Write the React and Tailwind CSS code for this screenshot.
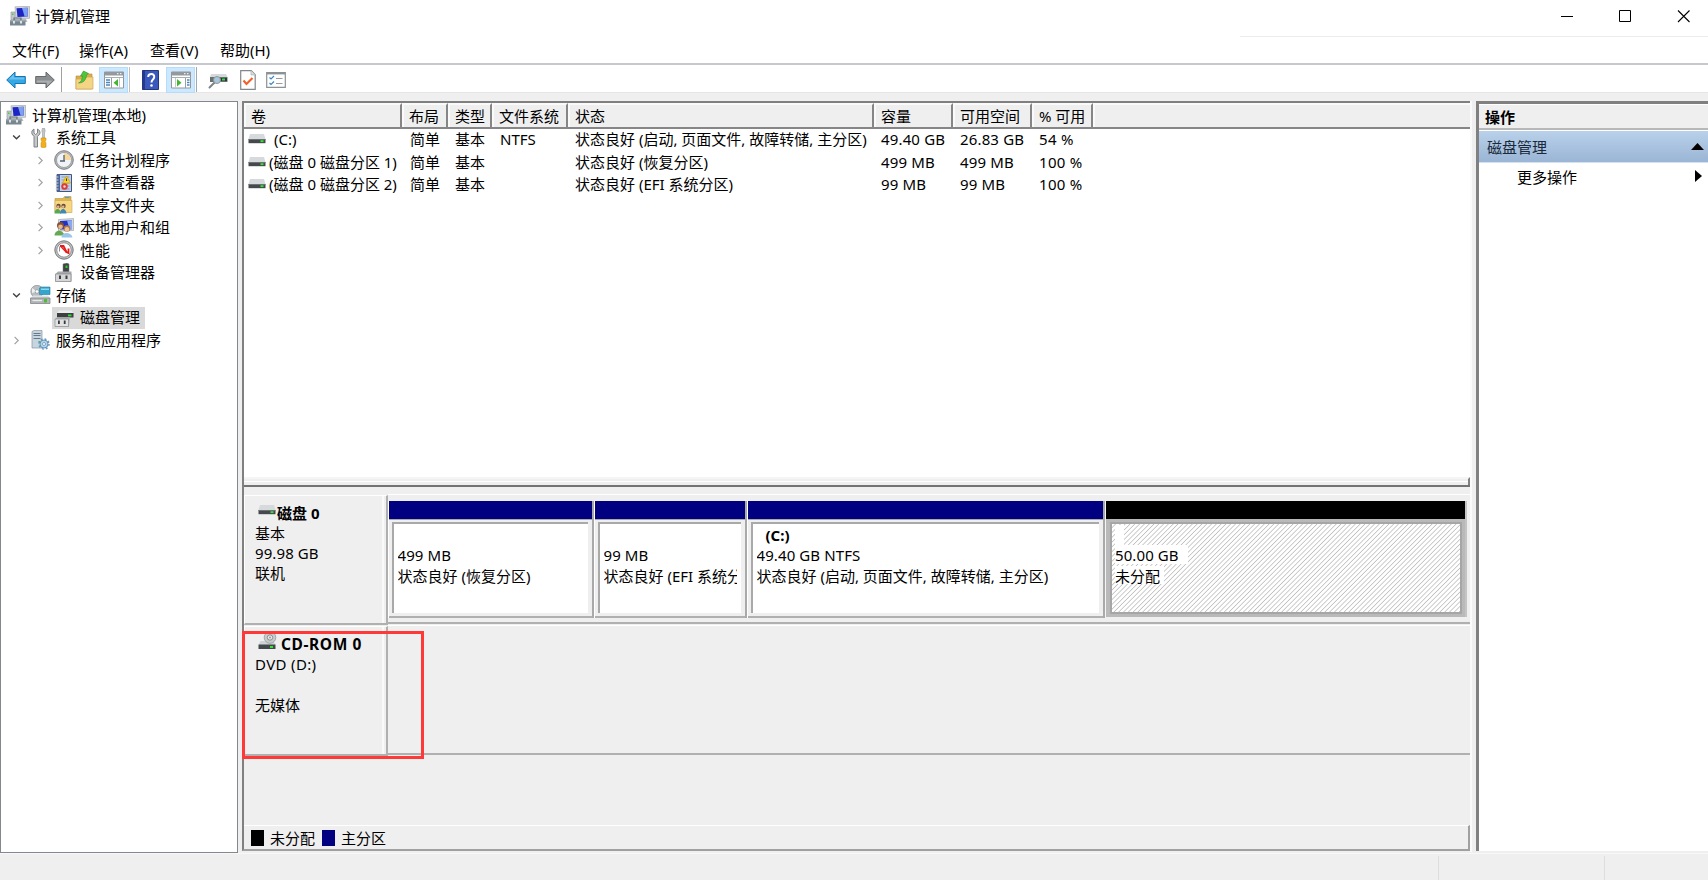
import React from "react";

const COLUMNS = ["卷", "布局", "类型", "文件系统", "状态", "容量", "可用空间", "% 可用", ""];

const VOLUMES = [
  {
    name: "(C:)",
    indent: true,
    fs: "NTFS",
    status: "状态良好 (启动, 页面文件, 故障转储, 主分区)",
    size: "49.40 GB",
    free: "26.83 GB",
    percent: "54 %",
  },
  {
    name: "(磁盘 0 磁盘分区 1)",
    fs: "",
    status: "状态良好 (恢复分区)",
    size: "499 MB",
    free: "499 MB",
    percent: "100 %",
  },
  {
    name: "(磁盘 0 磁盘分区 2)",
    fs: "",
    status: "状态良好 (EFI 系统分区)",
    size: "99 MB",
    free: "99 MB",
    percent: "100 %",
  },
];

const PARTITIONS = [
  { name: "", size: "499 MB", status: "状态良好 (恢复分区)", width: "w-[206px]" },
  { name: "", size: "99 MB", status: "状态良好 (EFI 系统分区)", width: "w-[153px]" },
  {
    name: "(C:)",
    size: "49.40 GB NTFS",
    status: "状态良好 (启动, 页面文件, 故障转储, 主分区)",
    width: "w-[358px]",
  },
];

/* ICONS */
function ComputerIcon() {
  return (
    <svg width="20" height="20" viewBox="0 0 20 20">
      <path d="M1 6h4v8H1z" fill="#c3c8cc" stroke="#8b9399" strokeWidth=".6" />
      <path d="M2 7.500h1.500v1.500H2z" fill="#46c93c" />
      <path d="M5 .8l14.500-.5v12L6 12.800z" fill="#d5d9dc" stroke="#9ba1a6" strokeWidth=".6" />
      <path d="M6.500 2.200l11.200-.4v8.800L7.500 11z" fill="#1c25c4" />
      <path d="M12 2l5.700-.2v8.800l-3 .2z" fill="#7ea0f0" />
      <path d="M10 13h6l1.500 3H10z" fill="#b6bcc0" />
      <path d="M4 12h7v2H4z" fill="none" stroke="#68747c" strokeWidth="1.200" />
      <path d="M0 14h15.500V19.500H0z" fill="#788690" />
      <path d="M0 14h15.500v1.500H0z" fill="#9aa8b0" />
      <path d="M3 15h2v2.500H3zM10 15h2v2.500h-2z" fill="#dde3e6" />
    </svg>
  );
}

function ToolsIcon() {
  return (
    <svg width="20" height="20" viewBox="0 0 20 20">
      <path d="M4 1v4l1.500 1.500L7.500 5V1c2 1 3 3 2.300 5L7.500 8.500V19H4V8.500L2 6C1.300 4 2 2 4 1z" fill="#c6c8ca" stroke="#75797c" strokeWidth=".9" />
      <path d="M12.500 0h2l.7 3-.7 2v5h-2V5l-.7-2z" fill="#c4c6c8" stroke="#8b8e90" strokeWidth=".5" />
      <path d="M11 10h5v2l-.8 1.500L16 15v4q-2.500 1.500-5 0v-4l.8-1.500L11 12z" fill="#f2b01e" stroke="#c98a0c" strokeWidth=".5" />
    </svg>
  );
}

function ClockIcon() {
  return (
    <svg width="20" height="20" viewBox="0 0 20 20">
      <circle cx="10" cy="10" r="9.300" fill="#b4b6b8" stroke="#7e8184" strokeWidth="1" />
      <circle cx="10" cy="10" r="7.500" fill="#f0f3f7" stroke="#94979a" strokeWidth=".8" />
      <path d="M10 10V3a7 7 0 0 1 7 7z" fill="#f7d7a0" />
      <path d="M10 5v6M6 11h5" fill="none" stroke="#56616b" strokeWidth="1.300" />
    </svg>
  );
}

function EventIcon() {
  return (
    <svg width="20" height="20" viewBox="0 0 20 20">
      <path d="M3 1.500h14.500v17H3z" fill="#c4d0e8" stroke="#3e5684" strokeWidth="1" />
      <path d="M3 1.500h3v17H3z" fill="#4d6699" />
      <path d="M1.500 4h3M1.500 7h3M1.500 10h3M1.500 13h3M1.500 16h3" stroke="#cdd1d6" strokeWidth="1.200" />
      <path d="M7.500 4h8M7.500 7h8M7.500 10h8M7.500 13h8M7.500 16h8" stroke="#7d90ba" strokeWidth=".8" />
      <path d="M12.500 3l4 7H8.500z" fill="#f8d321" stroke="#c99d0a" strokeWidth=".6" />
      <path d="M12.500 5.500v2.500" stroke="#3b3200" strokeWidth="1" />
      <circle cx="10.500" cy="13.500" r="3.200" fill="#dc3c36" />
      <circle cx="10.500" cy="13.500" r="1.200" fill="#f7dcda" />
    </svg>
  );
}

function SharedFolderIcon() {
  return (
    <svg width="20" height="20" viewBox="0 0 20 20">
      <path d="M1 3.500h8l1.500-2H17V17H1z" fill="#dfb64e" stroke="#bd9238" strokeWidth=".6" />
      <path d="M11 2.500h4.500" stroke="#4a9edb" strokeWidth="1.200" />
      <path d="M1 5.500h17V17.500H1z" fill="#f6d783" stroke="#cda651" strokeWidth=".6" />
      <circle cx="4.500" cy="11" r="2.200" fill="#6c4a35" />
      <circle cx="9.500" cy="11" r="2.200" fill="#684a37" />
      <circle cx="4.200" cy="11.800" r="1.300" fill="#e8b68e" />
      <circle cx="9.200" cy="11.800" r="1.300" fill="#e8b68e" />
      <path d="M.5 18.500c0-6 6-6 6.500 0z" fill="#57a853" />
      <path d="M6 18.500c0-6 6-6 6.500 0z" fill="#4286b8" />
    </svg>
  );
}

function UsersIcon() {
  return (
    <svg width="20" height="20" viewBox="0 0 20 20">
      <path d="M4.500 1.500l15-1v12L4.500 13z" fill="#d7dadd" stroke="#969ca2" strokeWidth=".6" />
      <path d="M6 3l12-.7v9L6 11.500z" fill="#1f32c5" />
      <path d="M13 2.500l5-.2v9h-2.500z" fill="#89a8f1" />
      <circle cx="6.500" cy="7.500" r="3.500" fill="#825237" />
      <circle cx="6.500" cy="8.800" r="2.300" fill="#ebb88c" />
      <path d="M.5 17.500c0-6.500 9-6.500 10 0z" fill="#66a952" />
      <circle cx="13" cy="10.500" r="3.300" fill="#a97750" />
      <circle cx="13" cy="11.300" r="2.200" fill="#f0c29a" />
      <path d="M7.500 19.500c0-6 10-6 11 0z" fill="#9ac7e9" />
    </svg>
  );
}

function PerformanceIcon() {
  return (
    <svg width="20" height="20" viewBox="0 0 20 20">
      <circle cx="10" cy="10" r="9.200" fill="#c0c2c4" stroke="#74787b" strokeWidth="1" />
      <circle cx="10" cy="10" r="7.200" fill="#fff" stroke="#86898b" strokeWidth=".9" />
      <path d="M5.500 6.500v5" stroke="#919395" strokeWidth="1" />
      <path d="M6 6h3.500l3 6 2 1V8.500" fill="none" stroke="#e51c1c" strokeWidth="1.800" />
      <path d="M6.500 6l6 6.500" fill="none" stroke="#e51c1c" strokeWidth="1.300" />
    </svg>
  );
}

function DeviceIcon() {
  return (
    <svg width="20" height="20" viewBox="0 0 20 20">
      <path d="M9 1l4-1 2 1v10H9z" fill="#3f4344" stroke="#777b7d" strokeWidth=".5" />
      <path d="M11.500 2.500h2v2.500h-2z" fill="#2bd32b" />
      <path d="M1.500 11L4 8.500h13.500v10H1.500z" fill="#a8aaac" />
      <path d="M1.500 11h15.500v7.500H1.500z" fill="#d5d6d7" stroke="#85888a" strokeWidth=".7" />
      <path d="M5 12.500h2V16H5zM11.500 12.500h2V16h-2z" fill="#3c3f40" />
    </svg>
  );
}

function StorageIcon() {
  return (
    <svg width="21" height="20" viewBox="0 0 21 20">
      <circle cx="7" cy="6.500" r="6.200" fill="#b9bec1" stroke="#8b9194" strokeWidth=".7" />
      <path d="M7 6.500L2 3v5z" fill="#eef0f1" />
      <circle cx="7" cy="6.500" r="1.800" fill="#fff" stroke="#8d9294" strokeWidth=".7" />
      <path d="M9.500 3l2-1H20v7.500H9.500z" fill="#35a5cd" stroke="#267b9c" strokeWidth=".6" />
      <path d="M11 3.500h8V5h-8z" fill="#87d6ee" />
      <path d="M3 10.500h15l2 2.500H0.500z" fill="#dedfe0" />
      <path d="M.5 13H20v5.500H.5z" fill="#b1b4b6" stroke="#777b7e" strokeWidth=".7" />
      <path d="M2.500 15.500H12" stroke="#eaecec" strokeWidth="1.300" />
      <path d="M14 14h3v3.500h-3z" fill="#4dbf2f" />
    </svg>
  );
}

function DiskManagementIcon() {
  return (
    <svg width="20" height="20" viewBox="0 0 20 20">
      <path d="M5 2.500h12.500l2 2.500H3z" fill="#e9ebec" />
      <path d="M3 5h16.500v4.500H3z" fill="#3b3f40" />
      <path d="M14 6.500h3.500v1.800H14z" fill="#30df38" />
      <path d="M1 11L3 9.300h13l-1 9.200H1z" fill="#aeb0b1" />
      <path d="M1 11h13.500v7.500H1z" fill="#e2e2e3" stroke="#898c8e" strokeWidth=".7" />
      <path d="M4 12.500h1.800v3.500H4zM9.800 12.500h1.800v3.500H9.800z" fill="#363a3b" />
    </svg>
  );
}

function ServicesIcon() {
  return (
    <svg width="20" height="20" viewBox="0 0 20 20">
      <path d="M2 1.500L4 .5h8V18H2z" fill="#c7d5e0" stroke="#8497a5" strokeWidth=".7" />
      <path d="M3.500 3.500h7M3.500 5.500h7M3.500 8.500h7" stroke="#667985" strokeWidth="1" />
      <path d="M8.500 11h2v1.500h-2z" fill="#43bd41" />
      <circle cx="14" cy="14" r="4" fill="#b3d3ea" stroke="#6796b9" strokeWidth="1" />
      <circle cx="14" cy="14" r="5" fill="none" stroke="#6796b9" strokeWidth="1.500" strokeDasharray="1.900 2.020" />
      <circle cx="14" cy="14" r="1.500" fill="#fff" stroke="#6796b9" strokeWidth=".8" />
    </svg>
  );
}

function DriveIcon() {
  return (
    <svg width="18" height="12" viewBox="0 0 18 12" className="shrink-0">
      <path d="M2 1h14l1.500 5H.5z" fill="#d7dadd" />
      <path d="M.5 6h17v4.200H.5z" fill="#45494b" />
      <path d="M.5 6h17v.8H.5z" fill="#777c7e" />
      <path d="M12.500 7.200h3v1.900h-3z" fill="#31e435" />
    </svg>
  );
}

function CdDriveIcon() {
  return (
    <svg width="19" height="18" viewBox="0 0 19 18">
      <path d="M2.500 8h13l2 4H.5z" fill="#d0d3d5" />
      <circle cx="12" cy="4.500" r="5.800" fill="#c9cacb" stroke="#8f9193" strokeWidth=".7" />
      <circle cx="12" cy="4.500" r="2.700" fill="#ececec" stroke="#7f8183" strokeWidth=".9" />
      <circle cx="12" cy="4.500" r=".9" fill="#8b8d8f" />
      <path d="M.5 11.500h17V16H.5z" fill="#43484a" />
      <path d="M12 13h3v2h-3z" fill="#31e435" />
    </svg>
  );
}

function ArrowIcon({ forward }) {
  const fill = forward ? "#8c8f91" : "#32a9e6";
  const edge = forward ? "#66696b" : "#1675ac";
  return (
    <svg width="20" height="18" viewBox="0 0 20 18" className={forward ? "rotate-180" : ""}>
      <path d="M.7 9L9 1v4.500h10.300v7H9V17z" fill={fill} stroke={edge} strokeWidth="1" />
      <path d="M2.500 8.500L8 3v3.500h10.300v2z" fill="#fff" opacity=".28" />
    </svg>
  );
}

function FolderUpIcon() {
  return (
    <svg width="19" height="20" viewBox="0 0 19 20">
      <path d="M1 6h7l1.500-2H17v15H1z" fill="#dcae4f" stroke="#b88a35" strokeWidth=".6" />
      <path d="M1 9h9l1.500-2H18v12H1z" fill="#f4d583" stroke="#c99e49" strokeWidth=".6" />
      <path d="M3.500 13c3-1 3.500-4 4-7H5.500L8.500 1l5 2.500-2 1.500c-.5 5-3 8-8 8z" fill="#4dc639" stroke="#2d9627" strokeWidth=".6" />
    </svg>
  );
}

function PaneIcon({ right }) {
  return (
    <svg width="20" height="18" viewBox="0 0 20 18">
      <path d="M.5 1h19v16H.5z" fill="#fff" stroke="#92979a" strokeWidth="1" />
      <path d="M.5 1h19v3.500H.5z" fill="#93999d" />
      <path d="M13 2.700h1.500M16 2.700h1.500" stroke="#fff" strokeWidth="1" />
      <path d="M.5 6.500h19" stroke="#a9aeb1" strokeWidth="1" />
      {right ? (
        <g>
          <path d="M14.500 7v10" stroke="#999fa3" strokeWidth="1" />
          <path d="M16 9h2.500M16 11.500h2.500M16 14h2.500" stroke="#4b86bd" strokeWidth="1.300" />
          <path d="M4.500 7v10" stroke="#c3c8cc" strokeWidth="1" />
          <path d="M6 8v7.500l4.500-3.800z" fill="#44b52e" />
        </g>
      ) : (
        <g>
          <path d="M7.500 7v10" stroke="#999fa3" strokeWidth="1" />
          <path d="M2 9h4M2 11.500h4M2 14h4" stroke="#4b86bd" strokeWidth="1.300" />
          <path d="M15.500 7v10" stroke="#c3c8cc" strokeWidth="1" />
          <path d="M14 8v7.500l-4.500-3.800z" fill="#44b52e" />
        </g>
      )}
    </svg>
  );
}

function HelpIcon() {
  return (
    <svg width="17" height="20" viewBox="0 0 17 20">
      <path d="M.5.5h16v19H.5z" fill="#3b59bd" stroke="#24377f" strokeWidth="1" />
      <path d="M.5.5h2.500v19H.5z" fill="#253a8b" />
      <path d="M6.200 7c0-4.300 6.500-4 6 .2-.2 2.500-2.700 2.300-2.700 5.300" fill="none" stroke="#fff" strokeWidth="2" />
      <circle cx="9.500" cy="15.500" r="1.300" fill="#fff" />
    </svg>
  );
}

function RescanIcon() {
  return (
    <svg width="20" height="18" viewBox="0 0 20 18">
      <path d="M3 3h15l1.500 3H2z" fill="#d6d9db" />
      <path d="M2 6h17.500v5H2z" fill="#6a7072" />
      <path d="M12 7h7v3h-7z" fill="#2f3638" />
      <path d="M14 7.500h3v2h-3z" fill="#35d93a" />
      <path d="M6.500 11.500L1.500 16.500" stroke="#7d8285" strokeWidth="2" strokeLinecap="round" />
      <circle cx="9" cy="9" r="3.500" fill="#a9c7d9" stroke="#8b979e" strokeWidth="1" />
    </svg>
  );
}

function CheckPageIcon() {
  return (
    <svg width="16" height="20" viewBox="0 0 16 20">
      <path d="M.7.7h10.500l4 4v14.600H.7z" fill="#fff" stroke="#83888b" strokeWidth="1.200" />
      <path d="M11 .7v4.200h4.200" fill="#dde0e2" stroke="#a5a9ac" strokeWidth=".7" />
      <path d="M3.500 10.500l3 3.500 6-6" fill="none" stroke="#f0622a" strokeWidth="2.200" />
    </svg>
  );
}

function ListIcon() {
  return (
    <svg width="20" height="16" viewBox="0 0 20 16">
      <path d="M.7.7h18.600v14.600H.7z" fill="#fff" stroke="#8c9194" strokeWidth="1.200" />
      <path d="M.7 1.500h18.600" stroke="#8c9194" strokeWidth="1.800" />
      <path d="M3.500 5.500l1.500 1.500 3-3M3.500 11l1.500 1.500 3-3" fill="none" stroke="#3987ca" strokeWidth="1.200" />
      <path d="M10 6.500h6.500M10 11.500h6.500" stroke="#979ca0" strokeWidth="1.200" />
    </svg>
  );
}

function Chevron({ open }) {
  return (
    <svg width="9" height="9" viewBox="0 0 8 8">
      {open ? (
        <path d="M1 2.200l3 3 3-3" fill="none" stroke="#404040" strokeWidth="1.200" />
      ) : (
        <path d="M2.300.8l3.200 3.200-3.200 3.200" fill="none" stroke="#a3a3a3" strokeWidth="1.100" />
      )}
    </svg>
  );
}

const TREE = [
  { label: "计算机管理(本地)", level: 0, Icon: ComputerIcon },
  { label: "系统工具", level: 1, arrow: "open", Icon: ToolsIcon },
  { label: "任务计划程序", level: 2, arrow: "closed", Icon: ClockIcon },
  { label: "事件查看器", level: 2, arrow: "closed", Icon: EventIcon },
  { label: "共享文件夹", level: 2, arrow: "closed", Icon: SharedFolderIcon },
  { label: "本地用户和组", level: 2, arrow: "closed", Icon: UsersIcon },
  { label: "性能", level: 2, arrow: "closed", Icon: PerformanceIcon },
  { label: "设备管理器", level: 2, Icon: DeviceIcon },
  { label: "存储", level: 1, arrow: "open", Icon: StorageIcon },
  { label: "磁盘管理", level: 2, Icon: DiskManagementIcon, selected: true },
  { label: "服务和应用程序", level: 1, arrow: "closed", Icon: ServicesIcon },
];

const LEVEL_PADDING = ["pl-[3px]", "pl-[11px]", "pl-[35px]"];

function TreeItem({ item }) {
  const { label, level, arrow, Icon, selected } = item;
  return (
    <div className={`flex h-[22.5px] items-center ${LEVEL_PADDING[level]}`}>
      {level > 0 && (
        <span className="flex w-[16px] shrink-0">
          {arrow && <Chevron open={arrow === "open"} />}
        </span>
      )}
      <span className={`flex h-[22px] items-center pr-[5px] ${selected ? "bg-[#d9d9d9]" : ""}`}>
        <span className="flex w-[28px] pl-[2px]">
          <Icon />
        </span>
        <span className="-mt-px">{label}</span>
      </span>
    </div>
  );
}

function Toolbar() {
  return (
    <div className="flex h-[28px] items-center border-b border-[#e6e6e6] bg-white pl-[6px] pt-[2px]">
      <ArrowIcon />
      <span className="ml-[9px]">
        <ArrowIcon forward />
      </span>
      <span className="ml-[6px] h-[25px] w-px bg-[#a0a0a0]" />
      <span className="ml-[13px]">
        <FolderUpIcon />
      </span>
      <span className="ml-[5px] flex h-[26px] w-[29px] items-center justify-center border border-[#b5dcf8] bg-[#cce8ff]">
        <PaneIcon />
      </span>
      <span className="ml-px h-[25px] w-px bg-[#c0c0c0]" />
      <span className="ml-[12px]">
        <HelpIcon />
      </span>
      <span className="ml-[7px] flex h-[26px] w-[29px] items-center justify-center border border-[#b5dcf8] bg-[#cce8ff]">
        <PaneIcon right />
      </span>
      <span className="ml-px h-[25px] w-px bg-[#a8a8a8]" />
      <span className="ml-[11px]">
        <RescanIcon />
      </span>
      <span className="ml-[12px]">
        <CheckPageIcon />
      </span>
      <span className="ml-[10px]">
        <ListIcon />
      </span>
    </div>
  );
}

const GRID = "grid grid-cols-[158px_46px_44px_76px_306px_79px_79px_61px_1fr]";

function VolumeTable() {
  return (
    <div className="h-[374px] bg-white">
      <div className={`${GRID} h-[26px] border-b-2 border-[#868686]`}>
        {COLUMNS.map((col, i) => (
          <div
            key={i}
            className={`flex items-center border-l-2 border-t-2 border-l-[#fafafa] border-t-[#fafafa] bg-[#efefef] pb-px pl-[5px] ${
              i < 8 ? "border-r-2 border-r-[#868686]" : ""
            }`}
          >
            {col}
          </div>
        ))}
      </div>
      {VOLUMES.map((v) => (
        <div key={v.name} className={`${GRID} h-[22.5px] items-center whitespace-nowrap pb-[2px]`}>
          <div className="flex items-center pl-[4px]">
            <DriveIcon />
            <span className={v.indent ? "ml-[8px]" : "ml-[3px]"}>{v.name}</span>
          </div>
          <div className="pl-[8px]">简单</div>
          <div className="pl-[7px]">基本</div>
          <div className="pl-[8px]">{v.fs}</div>
          <div className="pl-[7px]">{v.status}</div>
          <div className="pl-[7px] tracking-[0.15px]">{v.size}</div>
          <div className="pl-[7px] tracking-[0.15px]">{v.free}</div>
          <div className="pl-[7px] tracking-[0.3px]">{v.percent}</div>
        </div>
      ))}
    </div>
  );
}

function Partition({ part }) {
  return (
    <div className={`flex shrink-0 flex-col border-l border-r-2 border-l-white border-r-[#a9a9a9] ${part.width}`}>
      <div className="h-[18px] bg-[#000080]" />
      <div className="h-[99px] border-b-2 border-t border-b-[#b0b0b0] border-t-[#a9a9a9] pl-[3px] pr-[4px] pt-[2px]">
        <div className="h-[91px] overflow-hidden whitespace-nowrap border-l-2 border-t-2 border-[#a9a9a9] bg-white pl-[3.500px] pr-[4px] pt-px leading-[20px]">
          <div className="h-[20px] pl-[9px] font-bold">{part.name}</div>
          <div className="overflow-hidden tracking-[0.1px]">{part.size}</div>
          <div className="overflow-hidden pt-px">{part.status}</div>
        </div>
      </div>
    </div>
  );
}

function Unallocated() {
  return (
    <div className="flex w-[362px] shrink-0 flex-col border-l border-r-2 border-l-[#f5f5f5] border-r-[#c4c4c4]">
      <div className="h-[18px] bg-black" />
      <div className="h-[98px] bg-[#b9b9b9] pl-[4px] pr-[3px] pt-[3px]">
        <div className="h-[92px] border-2 border-[#a6a6a6] bg-[repeating-linear-gradient(135deg,#fff_0px,#fff_1.800px,#c0c0c0_2.600px,#fff_3.390px)] pl-[3px] pt-px leading-[20px]">
          <div className="h-[20px] w-[9px] bg-white" />
          <div className="h-[19px] w-[73px] bg-white tracking-[0.1px]">50.00 GB</div>
          <div className="mt-[2px] h-[18px] w-[49px] bg-white">未分配</div>
        </div>
      </div>
    </div>
  );
}

function DiskLabel({ children }) {
  return (
    <div className="mt-px flex w-[144px] shrink-0 flex-col border-b-2 border-l border-r-2 border-t border-b-[#b0b0b0] border-l-white border-r-[#b0b0b0] border-t-white">
      <div className="mr-[2px] h-full border-r-2 border-r-[#fafafa] pl-[10px] leading-[20px]">
        {children}
      </div>
    </div>
  );
}

function DiskMap() {
  return (
    <div className="flex h-[364px] flex-col border-t-2 border-[#737373] bg-[#efefef] pt-[7px]">
      {/* DISK 0 */}
      <div className="flex h-[131px]">
        <DiskLabel>
          <div className="flex pl-[3px] pt-[7px] font-bold">
            <span className="mt-px">
              <DriveIcon />
            </span>
            <span className="ml-px">磁盘 0</span>
          </div>
          <div>基本</div>
          <div className="tracking-[0.1px]">99.98 GB</div>
          <div>联机</div>
        </DiskLabel>
        <div className="mb-[1px] flex grow items-start border-b-2 border-t border-b-[#b0b0b0] border-t-white pt-[6px]">
          {PARTITIONS.map((p) => (
            <Partition key={p.size} part={p} />
          ))}
          <Unallocated />
        </div>
      </div>

      {/* CD-ROM 0 */}
      <div className="relative flex h-[131px]">
        <DiskLabel>
          <div className="flex h-[27px] pl-[3px] pt-[7px] font-bold">
            <span className="-mt-px">
              <CdDriveIcon />
            </span>
            <span className="ml-[4px] text-[15.500px] tracking-[0.6px]">CD-ROM 0</span>
          </div>
          <div className="tracking-[0.35px]">DVD (D:)</div>
          <div className="mt-[21px]">无媒体</div>
        </DiskLabel>
        <div className="mb-[1px] grow border-b-2 border-t border-b-[#b0b0b0] border-t-white" />
        <div className="absolute -left-[2px] top-[6px] h-[128px] w-[182px] border-[3px] border-[#ff3838]" />
      </div>

      {/* LEGEND */}
      <div className="mt-auto flex h-[24px] items-center border-r-2 border-t border-r-[#a0a0a0] border-t-white pl-[7px] pt-px">
        <span className="h-[16px] w-[13px] bg-black" />
        <span className="ml-[6px]">未分配</span>
        <span className="ml-[7px] h-[16px] w-[13px] bg-[#000080]" />
        <span className="ml-[6px]">主分区</span>
      </div>
    </div>
  );
}

function ActionsPane() {
  return (
    <div className="flex h-[750px] w-[232px] flex-col border-l-[3px] border-t-[3px] border-[#808080] bg-white">
      <div className="flex h-[26px] items-center border-b-2 border-t border-b-[#b8b8b8] border-t-white bg-[#efefef] pl-[6px] font-bold">
        操作
      </div>
      <div className="mt-px flex h-[32px] items-center justify-between border-b border-[#d5e2ef] bg-gradient-to-b from-[#b9d1ea] to-[#9ab5d5] pl-[8px] pr-[4px] text-[#1b2a3a]">
        <span>磁盘管理</span>
        <svg width="13" height="7" viewBox="0 0 13 7">
          <path d="M6.500 0L13 7H0z" fill="#000" />
        </svg>
      </div>
      <div className="flex h-[28px] items-center justify-between pl-[38px] pr-[6px]">
        <span>更多操作</span>
        <svg width="7" height="12" viewBox="0 0 7 12" className="-mt-[2px]">
          <path d="M0 0l7 6-7 6z" fill="#000" />
        </svg>
      </div>
    </div>
  );
}

export default function App() {
  return (
    <div className="flex h-[880px] w-[1708px] flex-col overflow-hidden bg-[#efefef] font-['Noto_Sans','Noto_Sans_CJK_SC',sans-serif] text-[15px] leading-[20px] text-black">
      {/* TITLE BAR */}
      <div className="flex h-[36px] items-center bg-white pb-[4px] pl-[10px]">
        <ComputerIcon />
        <span className="-mt-px ml-[5px]">计算机管理</span>
        <svg width="130" height="13" viewBox="0 0 130 13" className="ml-auto mr-[18px] mt-px">
          <path d="M1 6.500h12" stroke="#000" strokeWidth="1" />
          <path d="M59.500.5h11v11h-11z" fill="none" stroke="#000" strokeWidth="1" />
          <path d="M118 .5l11.500 11.500M129.500.5L118 12" stroke="#000" strokeWidth="1.100" />
        </svg>
      </div>

      {/* MENU */}
      <div className="flex h-[29px] border-b-2 border-[#c6c8cc] bg-white">
        <div className="flex items-center pl-[12px]">
          <span className="w-[67px] tracking-[0.1px]">文件(F)</span>
          <span className="w-[71px] tracking-[0.1px]">操作(A)</span>
          <span className="w-[70px] tracking-[0.1px]">查看(V)</span>
          <span>帮助(H)</span>
        </div>
        <div className="ml-auto h-px w-[468px] bg-[#ececec]" />
      </div>

      <Toolbar />

      <div className="flex h-[760px] items-start pt-[8px]">
        {/* TREE */}
        <div className="h-[752px] w-[238px] shrink-0 border border-[#828790] bg-white pt-[2px]">
          {TREE.map((item) => (
            <TreeItem key={item.label} item={item} />
          ))}
        </div>

        {/* VOLUMES AND DISKS */}
        <div className="ml-[4px] flex h-[750px] w-[1228px] shrink-0 flex-col border-b-2 border-l-2 border-t-2 border-b-[#a0a0a0] border-l-[#808080] border-t-[#808080]">
          <VolumeTable />
          <div className="h-[8px] border-r-2 border-t-2 border-r-[#808080] border-t-[#f5f5f5]">
            <div className="mt-[2px] h-px bg-white" />
          </div>
          <DiskMap />
        </div>
        <div className="h-[751px] w-[2px] bg-[#fafafa]" />
        <div className="w-[4px]" />

        <ActionsPane />
      </div>

      {/* STATUS BAR */}
      <div className="flex grow justify-end border-t border-[#f8f8f8] pt-[2px]">
        <div className="w-[166px] border-l border-[#dedede]" />
        <div className="w-[104px] border-l border-[#dedede]" />
      </div>
    </div>
  );
}
